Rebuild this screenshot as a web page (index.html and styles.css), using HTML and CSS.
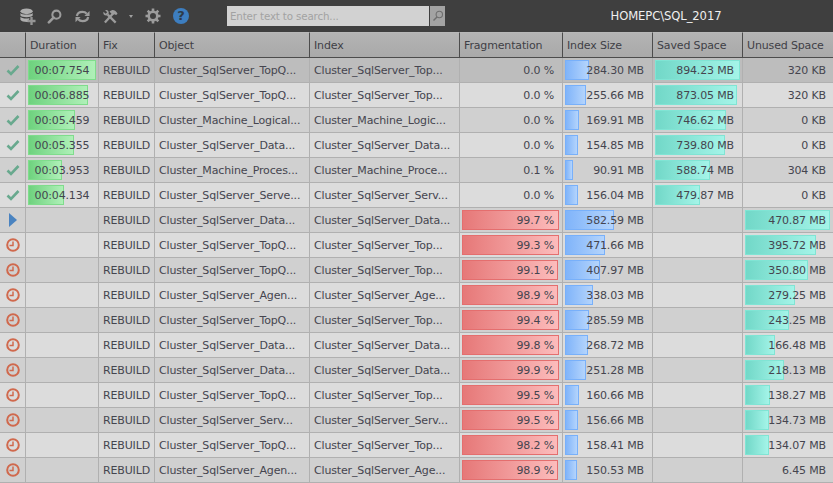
FILE: index.html
```html
<!DOCTYPE html>
<html lang="en">
<head>
<meta charset="utf-8">
<title>Index Manager</title>
<link rel="stylesheet" href="styles.css">
</head>
<body>
<div class="toolbar">
  <svg class="ico ico-db" viewBox="0 0 18 18"><ellipse cx="8" cy="3.500" rx="6.500" ry="3" fill="#aeaeae"/><path d="M1.500 5.300c1 2.200 12 2.200 13 0v2.700c-1 2.400-12 2.400-13 0z" fill="#aeaeae"/><path d="M1.500 9.300c1 2.200 9 2.400 10.500 1l-1.500 1.200v3.200c-3 .6-8-.2-9-2.200z" fill="#aeaeae"/><path d="M12 9.500h2.500v3h3v2.500h-3v3h-2.500v-3h-3v-2.500h3z" fill="#949494"/></svg>
  <svg class="ico ico-search" viewBox="0 0 16 16"><circle cx="10" cy="6" r="4.300" fill="none" stroke="#9c9c9c" stroke-width="2.200"/><path d="M7 9.200L2 14.200" stroke="#9c9c9c" stroke-width="2.800" stroke-linecap="round"/></svg>
  <svg class="ico ico-sync" viewBox="0 0 18 16"><path d="M3 7.500C3.500 4.500 6 3 9 3c2 0 3.500 .8 4.500 2" fill="none" stroke="#9c9c9c" stroke-width="2.400"/><path d="M16.500 2v5.500h-5.500z" fill="#9c9c9c"/><path d="M15 8.500C14.500 11.500 12 13 9 13c-2 0-3.500-.8-4.500-2" fill="none" stroke="#9c9c9c" stroke-width="2.400"/><path d="M1.500 14v-5.500h5.500z" fill="#9c9c9c"/></svg>
  <svg class="ico ico-tools" viewBox="0 0 18 16"><path d="M3 14.500L11.500 5" stroke="#9c9c9c" stroke-width="2.400"/><path d="M8 2.500l3-1.500c2.500 0 4.500 1.500 5.500 4l-1.500 1.500-2-1-1.500 1-3-3z" fill="#9c9c9c"/><path d="M14.500 14.500L6 6" stroke="#9c9c9c" stroke-width="2.400"/><path d="M1.500 2.800L3.800 5 5.500 3.500 3.300 1.300C5.500.400 7.800 2.300 7 5L5.200 6.800C2.800 7.500.7 5.300 1.500 2.800z" fill="#9c9c9c"/></svg>
  <span class="caret"></span>
  <svg class="ico ico-gear" viewBox="0 0 16 16"><circle cx="8" cy="8" r="4.300" fill="none" stroke="#9c9c9c" stroke-width="2.600"/><path d="M8 .5v3M8 12.500v3M.5 8h3M12.500 8h3M2.700 2.700l2.100 2.100M11.200 11.200l2.100 2.100M13.300 2.700l-2.100 2.100M4.800 11.200l-2.100 2.100" stroke="#9c9c9c" stroke-width="2.600"/></svg>
  <span class="help">?</span>
  <div class="search">
    <span class="search-input">Enter text to search...</span>
    <span class="search-btn"><svg viewBox="0 0 12 12" width="12" height="12"><circle cx="7.300" cy="4.500" r="3.200" fill="none" stroke="#6e6e6e" stroke-width="1.100"/><path d="M5 7L1.500 10.500" stroke="#6e6e6e" stroke-width="1.500"/></svg></span>
  </div>
  <div class="server">HOMEPC\SQL_2017</div>
</div>
<table class="grid">
<colgroup><col class="c-state"><col class="c-dur"><col class="c-fix"><col class="c-obj"><col class="c-idx"><col class="c-frag"><col class="c-size"><col class="c-saved"><col class="c-unused"></colgroup>
<thead><tr><th></th><th>Duration</th><th>Fix</th><th>Object</th><th>Index</th><th>Fragmentation</th><th>Index Size</th><th>Saved Space</th><th>Unused Space</th></tr></thead>
<tbody>
<tr class="first"><td class="st"><svg class="s-ok" viewBox="0 0 14 12"><path d="M1.500 6.500L5 10 12.500 2" fill="none" stroke="#68a98e" stroke-width="2.600"/></svg></td><td class="bc"><i class="bar green" style="width:68px"></i><span class="ctr">00:07.754</span></td><td>REBUILD</td><td>Cluster_SqlServer_TopQ...</td><td>Cluster_SqlServer_Top...</td><td class="num">0.0 %</td><td class="bc num"><i class="bar blue" style="width:24px"></i><span>284.30 MB</span></td><td class="bc num"><i class="bar teal" style="width:85px"></i><span>894.23 MB</span></td><td class="num">320 KB</td></tr>
<tr class="even"><td class="st"><svg class="s-ok" viewBox="0 0 14 12"><path d="M1.500 6.500L5 10 12.500 2" fill="none" stroke="#68a98e" stroke-width="2.600"/></svg></td><td class="bc"><i class="bar green" style="width:60px"></i><span class="ctr">00:06.885</span></td><td>REBUILD</td><td>Cluster_SqlServer_TopQ...</td><td>Cluster_SqlServer_Top...</td><td class="num">0.0 %</td><td class="bc num"><i class="bar blue" style="width:21px"></i><span>255.66 MB</span></td><td class="bc num"><i class="bar teal" style="width:82px"></i><span>873.05 MB</span></td><td class="num">320 KB</td></tr>
<tr><td class="st"><svg class="s-ok" viewBox="0 0 14 12"><path d="M1.500 6.500L5 10 12.500 2" fill="none" stroke="#68a98e" stroke-width="2.600"/></svg></td><td class="bc"><i class="bar green" style="width:47px"></i><span class="ctr">00:05.459</span></td><td>REBUILD</td><td>Cluster_Machine_Logical...</td><td>Cluster_Machine_Logic...</td><td class="num">0.0 %</td><td class="bc num"><i class="bar blue" style="width:14px"></i><span>169.91 MB</span></td><td class="bc num"><i class="bar teal" style="width:71px"></i><span>746.62 MB</span></td><td class="num">0 KB</td></tr>
<tr class="even"><td class="st"><svg class="s-ok" viewBox="0 0 14 12"><path d="M1.500 6.500L5 10 12.500 2" fill="none" stroke="#68a98e" stroke-width="2.600"/></svg></td><td class="bc"><i class="bar green" style="width:46px"></i><span class="ctr">00:05.355</span></td><td>REBUILD</td><td>Cluster_SqlServer_Data...</td><td>Cluster_SqlServer_Data...</td><td class="num">0.0 %</td><td class="bc num"><i class="bar blue" style="width:13px"></i><span>154.85 MB</span></td><td class="bc num"><i class="bar teal" style="width:70px"></i><span>739.80 MB</span></td><td class="num">0 KB</td></tr>
<tr><td class="st"><svg class="s-ok" viewBox="0 0 14 12"><path d="M1.500 6.500L5 10 12.500 2" fill="none" stroke="#68a98e" stroke-width="2.600"/></svg></td><td class="bc"><i class="bar green" style="width:34px"></i><span class="ctr">00:03.953</span></td><td>REBUILD</td><td>Cluster_Machine_Proces...</td><td>Cluster_Machine_Proce...</td><td class="num">0.1 %</td><td class="bc num"><i class="bar blue" style="width:8px"></i><span>90.91 MB</span></td><td class="bc num"><i class="bar teal" style="width:55px"></i><span>588.74 MB</span></td><td class="num">304 KB</td></tr>
<tr class="even"><td class="st"><svg class="s-ok" viewBox="0 0 14 12"><path d="M1.500 6.500L5 10 12.500 2" fill="none" stroke="#68a98e" stroke-width="2.600"/></svg></td><td class="bc"><i class="bar green" style="width:36px"></i><span class="ctr">00:04.134</span></td><td>REBUILD</td><td>Cluster_SqlServer_Serve...</td><td>Cluster_SqlServer_Serv...</td><td class="num">0.0 %</td><td class="bc num"><i class="bar blue" style="width:13px"></i><span>156.04 MB</span></td><td class="bc num"><i class="bar teal" style="width:45px"></i><span>479.87 MB</span></td><td class="num">0 KB</td></tr>
<tr><td class="st"><svg class="s-run" viewBox="0 0 8 14"><path d="M0 0L8 7 0 14z" fill="#4a83c0"/></svg></td><td></td><td>REBUILD</td><td>Cluster_SqlServer_Data...</td><td>Cluster_SqlServer_Data...</td><td class="bc num"><i class="bar red" style="width:97px"></i><span>99.7 %</span></td><td class="bc num"><i class="bar blue" style="width:49px"></i><span>582.59 MB</span></td><td></td><td class="bc num"><i class="bar teal" style="width:85px"></i><span>470.87 MB</span></td></tr>
<tr class="even"><td class="st"><svg class="s-wait" viewBox="0 0 14 14"><circle cx="7" cy="7" r="5.800" fill="none" stroke="#d0694d" stroke-width="2"/><path d="M7 3.500V7.500H3.500" fill="none" stroke="#d0694d" stroke-width="1.500"/></svg></td><td></td><td>REBUILD</td><td>Cluster_SqlServer_TopQ...</td><td>Cluster_SqlServer_Top...</td><td class="bc num"><i class="bar red" style="width:97px"></i><span>99.3 %</span></td><td class="bc num"><i class="bar blue" style="width:40px"></i><span>471.66 MB</span></td><td></td><td class="bc num"><i class="bar teal" style="width:71px"></i><span>395.72 MB</span></td></tr>
<tr><td class="st"><svg class="s-wait" viewBox="0 0 14 14"><circle cx="7" cy="7" r="5.800" fill="none" stroke="#d0694d" stroke-width="2"/><path d="M7 3.500V7.500H3.500" fill="none" stroke="#d0694d" stroke-width="1.500"/></svg></td><td></td><td>REBUILD</td><td>Cluster_SqlServer_TopQ...</td><td>Cluster_SqlServer_Top...</td><td class="bc num"><i class="bar red" style="width:96px"></i><span>99.1 %</span></td><td class="bc num"><i class="bar blue" style="width:35px"></i><span>407.97 MB</span></td><td></td><td class="bc num"><i class="bar teal" style="width:63px"></i><span>350.80 MB</span></td></tr>
<tr class="even"><td class="st"><svg class="s-wait" viewBox="0 0 14 14"><circle cx="7" cy="7" r="5.800" fill="none" stroke="#d0694d" stroke-width="2"/><path d="M7 3.500V7.500H3.500" fill="none" stroke="#d0694d" stroke-width="1.500"/></svg></td><td></td><td>REBUILD</td><td>Cluster_SqlServer_Agen...</td><td>Cluster_SqlServer_Age...</td><td class="bc num"><i class="bar red" style="width:96px"></i><span>98.9 %</span></td><td class="bc num"><i class="bar blue" style="width:28px"></i><span>338.03 MB</span></td><td></td><td class="bc num"><i class="bar teal" style="width:50px"></i><span>279.25 MB</span></td></tr>
<tr><td class="st"><svg class="s-wait" viewBox="0 0 14 14"><circle cx="7" cy="7" r="5.800" fill="none" stroke="#d0694d" stroke-width="2"/><path d="M7 3.500V7.500H3.500" fill="none" stroke="#d0694d" stroke-width="1.500"/></svg></td><td></td><td>REBUILD</td><td>Cluster_SqlServer_TopQ...</td><td>Cluster_SqlServer_Top...</td><td class="bc num"><i class="bar red" style="width:97px"></i><span>99.4 %</span></td><td class="bc num"><i class="bar blue" style="width:24px"></i><span>285.59 MB</span></td><td></td><td class="bc num"><i class="bar teal" style="width:44px"></i><span>243.25 MB</span></td></tr>
<tr class="even"><td class="st"><svg class="s-wait" viewBox="0 0 14 14"><circle cx="7" cy="7" r="5.800" fill="none" stroke="#d0694d" stroke-width="2"/><path d="M7 3.500V7.500H3.500" fill="none" stroke="#d0694d" stroke-width="1.500"/></svg></td><td></td><td>REBUILD</td><td>Cluster_SqlServer_Data...</td><td>Cluster_SqlServer_Data...</td><td class="bc num"><i class="bar red" style="width:97px"></i><span>99.8 %</span></td><td class="bc num"><i class="bar blue" style="width:23px"></i><span>268.72 MB</span></td><td></td><td class="bc num"><i class="bar teal" style="width:30px"></i><span>166.48 MB</span></td></tr>
<tr><td class="st"><svg class="s-wait" viewBox="0 0 14 14"><circle cx="7" cy="7" r="5.800" fill="none" stroke="#d0694d" stroke-width="2"/><path d="M7 3.500V7.500H3.500" fill="none" stroke="#d0694d" stroke-width="1.500"/></svg></td><td></td><td>REBUILD</td><td>Cluster_SqlServer_Data...</td><td>Cluster_SqlServer_Data...</td><td class="bc num"><i class="bar red" style="width:97px"></i><span>99.9 %</span></td><td class="bc num"><i class="bar blue" style="width:21px"></i><span>251.28 MB</span></td><td></td><td class="bc num"><i class="bar teal" style="width:39px"></i><span>218.13 MB</span></td></tr>
<tr class="even"><td class="st"><svg class="s-wait" viewBox="0 0 14 14"><circle cx="7" cy="7" r="5.800" fill="none" stroke="#d0694d" stroke-width="2"/><path d="M7 3.500V7.500H3.500" fill="none" stroke="#d0694d" stroke-width="1.500"/></svg></td><td></td><td>REBUILD</td><td>Cluster_SqlServer_TopQ...</td><td>Cluster_SqlServer_Top...</td><td class="bc num"><i class="bar red" style="width:97px"></i><span>99.5 %</span></td><td class="bc num"><i class="bar blue" style="width:14px"></i><span>160.66 MB</span></td><td></td><td class="bc num"><i class="bar teal" style="width:25px"></i><span>138.27 MB</span></td></tr>
<tr><td class="st"><svg class="s-wait" viewBox="0 0 14 14"><circle cx="7" cy="7" r="5.800" fill="none" stroke="#d0694d" stroke-width="2"/><path d="M7 3.500V7.500H3.500" fill="none" stroke="#d0694d" stroke-width="1.500"/></svg></td><td></td><td>REBUILD</td><td>Cluster_SqlServer_Serv...</td><td>Cluster_SqlServer_Serv...</td><td class="bc num"><i class="bar red" style="width:97px"></i><span>99.5 %</span></td><td class="bc num"><i class="bar blue" style="width:13px"></i><span>156.66 MB</span></td><td></td><td class="bc num"><i class="bar teal" style="width:24px"></i><span>134.73 MB</span></td></tr>
<tr class="even"><td class="st"><svg class="s-wait" viewBox="0 0 14 14"><circle cx="7" cy="7" r="5.800" fill="none" stroke="#d0694d" stroke-width="2"/><path d="M7 3.500V7.500H3.500" fill="none" stroke="#d0694d" stroke-width="1.500"/></svg></td><td></td><td>REBUILD</td><td>Cluster_SqlServer_TopQ...</td><td>Cluster_SqlServer_Top...</td><td class="bc num"><i class="bar red" style="width:96px"></i><span>98.2 %</span></td><td class="bc num"><i class="bar blue" style="width:13px"></i><span>158.41 MB</span></td><td></td><td class="bc num"><i class="bar teal" style="width:24px"></i><span>134.07 MB</span></td></tr>
<tr><td class="st"><svg class="s-wait" viewBox="0 0 14 14"><circle cx="7" cy="7" r="5.800" fill="none" stroke="#d0694d" stroke-width="2"/><path d="M7 3.500V7.500H3.500" fill="none" stroke="#d0694d" stroke-width="1.500"/></svg></td><td></td><td>REBUILD</td><td>Cluster_SqlServer_Agen...</td><td>Cluster_SqlServer_Age...</td><td class="bc num"><i class="bar red" style="width:96px"></i><span>98.9 %</span></td><td class="bc num"><i class="bar blue" style="width:12px"></i><span>150.53 MB</span></td><td></td><td class="num">6.45 MB</td></tr>
</tbody>
</table>
</body>
</html>
```
FILE: styles.css
```css
* { box-sizing: border-box; }
html, body { margin: 0; padding: 0; height: 100%; overflow: hidden; }
body { background: #d2d2d2; font-family: "DejaVu Sans", "Noto Sans", sans-serif; font-size: 11px; letter-spacing: -0.15px; color: #45454f; }

.toolbar { height: 32px; background: #3f3f3f; display: flex; align-items: center; }
.ico { display: block; flex: none; }
.ico-db { width: 17px; height: 17px; margin-left: 19px; }
.ico-search { width: 15px; height: 15px; margin-left: 11px; }
.ico-sync { width: 17px; height: 15px; margin-left: 12px; }
.ico-tools { width: 17px; height: 15px; margin-left: 11px; }
.caret { width: 0; height: 0; border: 2.500px solid transparent; border-top: 3px solid #a0a0a0; border-bottom: 0; margin-left: 10px; }
.ico-gear { width: 16px; height: 16px; margin-left: 12px; }
.help { width: 16px; height: 16px; border-radius: 50%; background: #3d7ec0; color: #2d3a4a; font-weight: 700; font-size: 13px; line-height: 16px; text-align: center; margin-left: 12px; flex: none; }
.search { display: flex; margin-left: 38px; height: 20px; flex: none; }
.search-input { width: 202px; background: #d2d2d2; color: #a2a2a2; padding-left: 3px; line-height: 20px; font-size: 10.300px; }
.search-btn { width: 15px; background: #a3a3a3; margin-left: 1px; display: flex; align-items: center; justify-content: center; }
.server { flex: 1; text-align: center; color: #f0f0f0; font-size: 11.600px; letter-spacing: -0.1px; padding-left: 54px; }

.grid { border-collapse: separate; border-spacing: 0; table-layout: fixed; width: 833px; }
.c-state { width: 26px; } .c-dur { width: 73px; } .c-fix { width: 56px; } .c-obj { width: 155px; }
.c-idx { width: 150px; } .c-frag { width: 103px; } .c-size { width: 90px; } .c-saved { width: 90px; } .c-unused { width: 90px; }

th { height: 26px; padding: 0 4px; font-weight: 400; text-align: left; color: #3f3f46; background: linear-gradient(#b4b4b4, #a9a9a9); border-right: 1px solid #4c4c4c; border-bottom: 1px solid #4c4c4c; border-top: 1px solid #b8b8b8; white-space: nowrap; overflow: hidden; }
th:last-child { border-right: 0; }
td { height: 25px; padding: 0 4px; background: #d0d0d0; border-right: 1px solid #b0b0b0; border-bottom: 1px solid #b0b0b0; white-space: nowrap; overflow: hidden; }
td:last-child { border-right: 0; }
.even td { background: #dcdcdc; }
.first td { background: #bdbdbd; }
.num { text-align: right; padding-right: 8px; }
td.num:last-child { padding-right: 7px; }
.bc { position: relative; }
.bc > span { position: relative; z-index: 1; }
.bc .ctr { display: block; text-align: center; }
.bar { position: absolute; left: 2px; top: 2px; bottom: 2px; border: 1px solid; }
.green { background: linear-gradient(90deg, #6ed27e, #aff0b8); border-color: #7fdc8c; }
.blue { background: linear-gradient(90deg, #80b4fa, #b4d4fc); border-color: #78b0fa; }
.teal { background: linear-gradient(90deg, #72d8c8, #a4f4e8); border-color: #80e4d4; }
.red { background: linear-gradient(90deg, #e67878, #fcbcbc); border-color: #e46e6e; }
.st { padding: 0; text-align: center; }
.st svg { display: block; margin: auto; }
.s-ok { width: 14px; height: 12px; }
.s-run { width: 8px; height: 14px; }
.s-wait { width: 14px; height: 14px; }
```
